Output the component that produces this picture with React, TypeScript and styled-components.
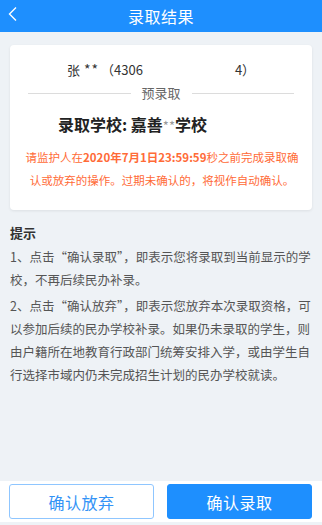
import React from "react";
import styled, {createGlobalStyle} from "styled-components";

const GlobalStyle = createGlobalStyle`
    html, body {
        margin: 0;
        padding: 0;
        background: #eef2f6;
    }
    body {
        font-family: "Noto Sans CJK SC", "Noto Sans", sans-serif;
    }
`

const Page = styled.div`
    height: 100vh;
    display: flex;
    flex-direction: column;
    background: #eef2f6;
`

const Header = styled.div`
    height: 32px;
    flex-shrink: 0;
    background: #1e8ffe;
    display: flex;
    align-items: center;
    justify-content: center;
    position: relative;
    color: #fff;
    font-size: 16px;
    letter-spacing: 0.5px;
`

const Back = styled.div`
    position: absolute;
    left: 7px;
    top: 6px;
    width: 12px;
    height: 16px;
    display: flex;
`

const Content = styled.div`
    flex-grow: 1;
    padding: 13px 10px 0;
`

const Card = styled.div`
    background: #fff;
    border-radius: 4px;
    box-shadow: 0 1px 3px rgba(0, 0, 0, 0.08);
    padding: 13px 18px 20px;
    height: 165px;
    box-sizing: border-box;
`

const NameLine = styled.div`
    text-align: center;
    font-size: 13px;
    color: #333;
    line-height: 22px;
    .stars {
        font-size: 14px;
        letter-spacing: 1px;
        margin: 0 2px 0 4px;
    }
    .mask {
        display: inline-block;
        width: 92px;
        height: 14px;
        vertical-align: middle;
    }
`

const Divider = styled.div`
    display: flex;
    align-items: center;
    margin-top: 2px;
    font-size: 13px;
    color: #666;
    line-height: 20px;
    &::before, &::after {
        content: "";
        flex-grow: 1;
        height: 1px;
        background: #dcdcdc;
    }
    span {
        margin: 0 11px;
    }
`

const School = styled.div`
    margin-top: 10px;
    padding-left: 30px;
    font-size: 16px;
    font-weight: 700;
    color: #222;
    line-height: 22px;
    .star {
        color: #999;
        font-weight: 400;
        font-size: 13px;
    }
`

const Notice = styled.p`
    margin: 9px 0 0 -4px;
    width: 276px;
    text-align: center;
    font-size: 11.5px;
    line-height: 23px;
    color: #ff6b37;
    strong {
        font-weight: 700;
    }
`

const Tips = styled.div`
    padding: 13px 0 0;
    color: #555;
    font-size: 12.5px;
    line-height: 23px;
`

const TipsTitle = styled.div`
    font-weight: 700;
    color: #333;
    font-size: 13px;
    line-height: 20px;
    margin-bottom: 2px;
`

const Para = styled.p`
    margin: 0 0 3px;
`

const Footer = styled.div`
    flex-shrink: 0;
    background: #fff;
    display: flex;
    gap: 13px;
    padding: 3px 10px 3px 9px;
    margin-bottom: 3px;
`

const Btn = styled.button<{primary?: boolean}>`
    flex: 1;
    height: 35px;
    border-radius: 3px;
    font-family: inherit;
    font-size: 16px;
    letter-spacing: 0.5px;
    cursor: pointer;
    border: 1px solid ${p => p.primary ? '#1e8ffe' : '#8fc6ff'};
    background: ${p => p.primary ? '#1e8ffe' : '#fff'};
    color: ${p => p.primary ? '#fff' : '#3393f6'};
`

export default function App() {
    return (
        <Page>
            <GlobalStyle/>
            <Header>
                <Back>
                    <svg width="12" height="16" viewBox="0 0 12 16">
                        <path d="M9 1.5 L2.5 8 L9 14.5" fill="none" stroke="#fff" strokeWidth="1.4"/>
                    </svg>
                </Back>
                录取结果
            </Header>
            <Content>
                <Card>
                    <NameLine>张<span className="stars">**</span>（4306<span className="mask"/>4）</NameLine>
                    <Divider><span>预录取</span></Divider>
                    <School>录取学校: 嘉善<span className="star">**</span>学校</School>
                    <Notice>
                        请监护人在<strong>2020年7月1日23:59:59</strong>秒之前完成录取确认或放弃的操作。过期未确认的，将视作自动确认。
                    </Notice>
                </Card>
                <Tips>
                    <TipsTitle>提示</TipsTitle>
                    <Para>1、点击“确认录取”，即表示您将录取到当前显示的学校，不再后续民办补录。</Para>
                    <Para>2、点击“确认放弃”，即表示您放弃本次录取资格，可以参加后续的民办学校补录。如果仍未录取的学生，则由户籍所在地教育行政部门统筹安排入学，或由学生自行选择市域内仍未完成招生计划的民办学校就读。</Para>
                </Tips>
            </Content>
            <Footer>
                <Btn>确认放弃</Btn>
                <Btn primary>确认录取</Btn>
            </Footer>
        </Page>
    )
}
